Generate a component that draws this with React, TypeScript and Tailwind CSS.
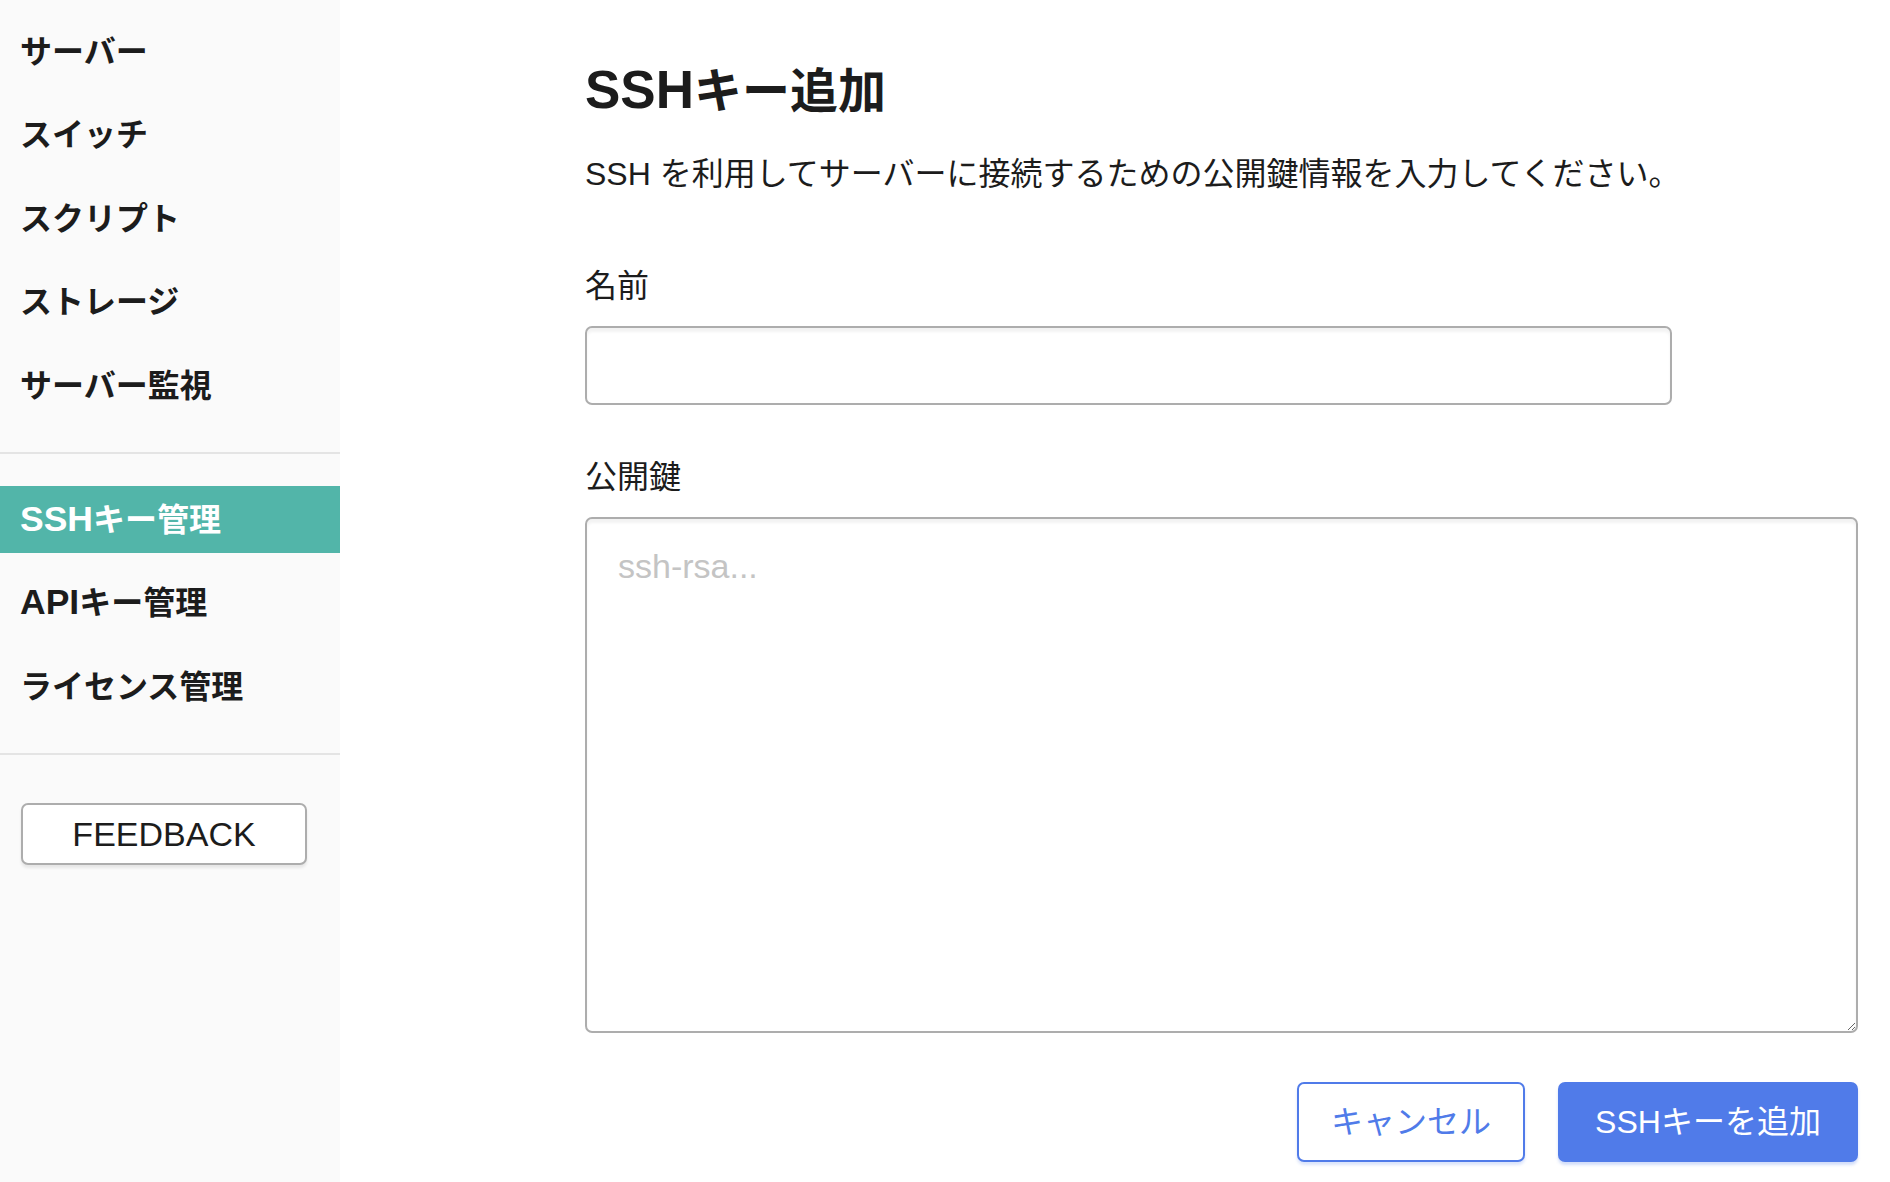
import React from 'react';

const font = "font-['Liberation_Sans','Noto_Sans_CJK_JP',sans-serif]";

const topItems = ['サーバー', 'スイッチ', 'スクリプト', 'ストレージ', 'サーバー監視'];

const NavItem: React.FC<{ latin?: string; label: string; active?: boolean }> = ({ latin, label, active }) => (
  <li
    className={
      active
        ? 'h-[67px] flex items-center pl-[20px] bg-[#52b5a9] text-white font-bold text-[32px]'
        : 'h-[67px] flex items-center pl-[20px] text-[#1c1c1c] font-bold text-[32px]'
    }
  >
    <span>
      {latin && <span className="text-[35.5px]">{latin}</span>}
      {label}
    </span>
  </li>
);

const Sidebar: React.FC = () => (
  <aside className="w-[340px] shrink-0 h-full bg-[#fafafa]">
    <ul className="flex flex-col gap-[16.5px] pt-[18px] pb-[33px]">
      {topItems.map((item) => (
        <NavItem key={item} label={item} />
      ))}
    </ul>
    <div className="h-[2px] bg-[#e4e4e4]" />
    <ul className="flex flex-col gap-[16.5px] pt-[32px] pb-[33px]">
      <NavItem latin="SSH" label="キー管理" active />
      <NavItem latin="API" label="キー管理" />
      <NavItem label="ライセンス管理" />
    </ul>
    <div className="h-[2px] bg-[#e4e4e4]" />
    <div className="pt-[48px] pl-[21px]">
      <button className="w-[286px] h-[62px] bg-white border-2 border-[#adadad] rounded-[7px] shadow-[0_3px_3px_rgba(0,0,0,0.08)] text-[34px] text-[#1c1c1c]">
        FEEDBACK
      </button>
    </div>
  </aside>
);

const App: React.FC = () => {
  return (
    <div className={`flex w-[1890px] h-[1182px] overflow-hidden bg-white ${font}`}>
      <Sidebar />
      <main className="flex-1 pl-[245px] pr-[32px] pt-[61px] text-[#1c1c1c]">
        <h1 className="h-[58px] text-[48px] leading-[58px] font-bold">
          <span className="text-[53px]">SSH</span>キー追加
        </h1>
        <p className="mt-[35px] text-[32px] leading-[40px]">
          SSH を利用してサーバーに接続するための公開鍵情報を入力してください。
        </p>

        <label className="block mt-[72px] text-[32px] leading-[40px]">名前</label>
        <input
          type="text"
          className="block mt-[20px] w-[1087px] h-[79px] px-[30px] text-[32px] bg-white border-2 border-[#adadad] rounded-[7px] shadow-[inset_0_4px_3px_rgba(0,0,0,0.05)] outline-none"
        />

        <label className="block mt-[52px] text-[32px] leading-[40px]">公開鍵</label>
        <textarea
          placeholder="ssh-rsa..."
          className="block mt-[20px] w-[1273px] h-[516px] px-[31px] py-[27px] text-[34px] leading-[40px] bg-white border-2 border-[#adadad] rounded-[7px] shadow-[inset_0_4px_3px_rgba(0,0,0,0.05)] placeholder:text-[#c4c4c4] outline-none"
        />

        <div className="mt-[49px] w-[1273px] flex justify-end gap-[33px]">
          <button className="w-[228px] h-[80px] bg-white border-2 border-[#507be9] rounded-[7px] text-[#507be9] text-[32px] shadow-[0_3px_3px_rgba(80,123,233,0.2)]">
            キャンセル
          </button>
          <button className="w-[300px] h-[80px] bg-[#507be9] rounded-[7px] text-white text-[32px] shadow-[0_3px_3px_rgba(80,123,233,0.25)]">
            SSHキーを追加
          </button>
        </div>
      </main>
    </div>
  );
};

export default App;
